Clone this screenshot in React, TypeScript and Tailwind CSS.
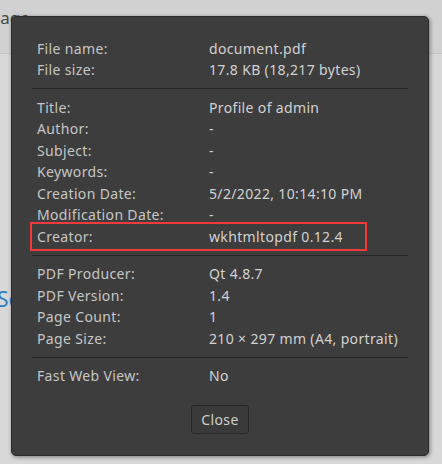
const fileRows = [
  { label: "File name:", value: "document.pdf" },
  { label: "File size:", value: "17.8 KB (18,217 bytes)" },
];

const docRows = [
  { label: "Title:", value: "Profile of admin" },
  { label: "Author:", value: "-" },
  { label: "Subject:", value: "-" },
  { label: "Keywords:", value: "-" },
  { label: "Creation Date:", value: "5/2/2022, 10:14:10 PM" },
  { label: "Modification Date:", value: "-" },
  { label: "Creator:", value: "wkhtmltopdf 0.12.4", marked: true },
];

const pdfRows = [
  { label: "PDF Producer:", value: "Qt 4.8.7" },
  { label: "PDF Version:", value: "1.4" },
  { label: "Page Count:", value: "1" },
  { label: "Page Size:", value: "210 × 297 mm (A4, portrait)" },
];

type Row = { label: string; value: string; marked?: boolean };

function PropRow({ row }: { row: Row }) {
  return (
    <div className="relative flex pl-[5px] leading-[21.5px]">
      <div className="w-[172px] shrink-0 text-[#c6c6c6]">{row.label}</div>
      <div className="text-[#d2d2d2]">{row.value}</div>
      {/* highlight box drawn over the row */}
      {row.marked && (
        <div className="absolute left-[-2px] top-[-4px] w-[337px] h-[29px] border-2 border-[#ef3a3c]" />
      )}
    </div>
  );
}

function Section({ rows }: { rows: Row[] }) {
  return (
    <div className="py-[7.5px]">
      {rows.map((r) => (
        <PropRow key={r.label} row={r} />
      ))}
    </div>
  );
}

export default function App() {
  return (
    <div
      className="relative w-[442px] h-[464px] overflow-hidden bg-[#d8d8d8]"
      style={{ fontFamily: '"Noto Sans", "Open Sans", sans-serif' }}
    >
      {/* Page behind the dialog */}
      <div className="h-[54px] bg-[#d1d1d1] border-b border-[#c4c4c4] pt-[5px]">
        <span className="ml-[-10px] text-[17px] text-[#474747]">Page</span>
      </div>
      <div className="pt-[230px]">
        <span className="ml-[-3px] text-[21px] text-[#2f80c2]">See</span>
      </div>

      {/* Document properties dialog */}
      <div className="absolute left-[11px] top-[16px] w-[418px] h-[440px] rounded-[5px] border border-[#2a2a2a] bg-[#3d3d3d] px-[20px] pt-[13px] text-[14px] tracking-[0.35px] shadow-[1px_1px_4px_rgba(0,0,0,0.45)]">
        <Section rows={fileRows} />
        <div className="h-px bg-[#262626]" />
        <Section rows={docRows} />
        <div className="h-px bg-[#262626]" />
        <Section rows={pdfRows} />
        <div className="h-px bg-[#262626]" />
        <Section rows={[{ label: "Fast Web View:", value: "No" }]} />
        <div className="flex justify-center pt-[11px]">
          <button className="h-[29px] w-[58px] rounded-[3px] border border-[#262626] bg-[#3a3a3a] text-[14px] text-[#cfcfcf]">
            Close
          </button>
        </div>
      </div>
    </div>
  );
}
